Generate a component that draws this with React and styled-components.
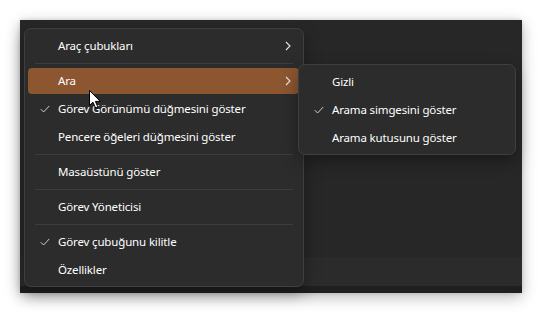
import React from "react";
import styled, { createGlobalStyle } from "styled-components";

const GlobalStyle = createGlobalStyle`
  html, body {
    margin: 0;
    background: #ffffff;
  }
  * {
    box-sizing: border-box;
  }
`;

const mainItems = [
  { id: "toolbars", label: "Araç çubukları", submenu: true },
  { id: "sep1", separator: true },
  { id: "search", label: "Ara", submenu: true, active: true },
  { id: "taskview", label: "Görev Görünümü düğmesini göster", checked: true },
  { id: "windows", label: "Pencere öğeleri düğmesini göster" },
  { id: "sep2", separator: true },
  { id: "desktop", label: "Masaüstünü göster" },
  { id: "sep3", separator: true },
  { id: "taskmgr", label: "Görev Yöneticisi" },
  { id: "sep4", separator: true },
  { id: "lock", label: "Görev çubuğunu kilitle", checked: true },
  { id: "props", label: "Özellikler" }
];

const searchItems = [
  { id: "hidden", label: "Gizli" },
  { id: "icon", label: "Arama simgesini göster", checked: true },
  { id: "box", label: "Arama kutusunu göster" }
];

const Check = () => (
  <svg width="10" height="8" viewBox="0 0 10 8">
    <path d="M0.8 4.2 L3.6 7 L9.2 1" fill="none" stroke="#cfcfcf" strokeWidth="1" />
  </svg>
);

const Chevron = () => (
  <svg width="6" height="10" viewBox="0 0 6 10">
    <path d="M1 1 L5 5 L1 9" fill="none" stroke="#e6e6e6" strokeWidth="1.1" />
  </svg>
);

const Pointer = () => (
  <svg width="13" height="19" viewBox="0 0 13 19">
    <path
      d="M0.5 0.5 L0.5 15.5 L4 12.2 L6.6 18 L8.9 17 L6.4 11.4 L11.3 11.4 Z"
      fill="#ffffff"
      stroke="#000000"
      strokeWidth="1"
      strokeLinejoin="round"
    />
  </svg>
);

const MenuList = ({ items }) => (
  <>
    {items.map(item =>
      item.separator ? (
        <Separator key={item.id} />
      ) : (
        <Row key={item.id}>
          <RowInner active={item.active}>
            <CheckSlot>{item.checked && <Check />}</CheckSlot>
            <Label>{item.label}</Label>
            <ArrowSlot>{item.submenu && <Chevron />}</ArrowSlot>
          </RowInner>
        </Row>
      )
    )}
  </>
);

const App = () => {
  return (
    <>
      <GlobalStyle />
      <Page>
        <Window>
          <Desktop />
          <TaskbarBand />
          <BottomStrip />

          <MainMenu>
            <MenuList items={mainItems} />
          </MainMenu>

          <SubMenu>
            <MenuList items={searchItems} />
          </SubMenu>

          <Cursor>
            <Pointer />
          </Cursor>
        </Window>
      </Page>
    </>
  );
};

const Page = styled.div`
  width: 542px;
  height: 313px;
  padding: 20px;
  background: #ffffff;
`;

const Window = styled.div`
  position: relative;
  width: 502px;
  height: 273px;
  display: flex;
  flex-direction: column;
  background: #272727;
  box-shadow: 0 4px 14px rgba(0, 0, 0, 0.28), 0 0 4px rgba(0, 0, 0, 0.12);
  font-family: "Noto Sans", "Open Sans", sans-serif;
`;

const Desktop = styled.div`
  flex: 1;
`;

const TaskbarBand = styled.div`
  height: 29px;
  background: #2b2b2b;
`;

const BottomStrip = styled.div`
  height: 7px;
  background: #1f1f1f;
`;

const Menu = styled.div`
  position: absolute;
  display: flex;
  flex-direction: column;
  background: #2c2c2c;
  border: 1px solid #3f3f3f;
  border-radius: 7px;
  box-shadow: 0 6px 16px rgba(0, 0, 0, 0.35);
`;

const MainMenu = styled(Menu)`
  left: 4px;
  top: 8px;
  width: 280px;
  padding: 3px 0 2px;
`;

const SubMenu = styled(Menu)`
  left: 278px;
  top: 44px;
  width: 218px;
  padding: 3px 0 2px;
`;

const Row = styled.div`
  height: 28px;
  padding: 1px 4px 1px 3px;
`;

const RowInner = styled.div`
  height: 100%;
  display: flex;
  align-items: center;
  border-radius: 4px;
  background: ${p => (p.active ? "#8b5630" : "transparent")};
`;

const CheckSlot = styled.div`
  width: 30px;
  display: flex;
  justify-content: center;
  padding-left: 4px;
`;

const Label = styled.span`
  flex: 1;
  color: #ffffff;
  font-size: 11.5px;
  letter-spacing: -0.15px;
  line-height: 16px;
  white-space: nowrap;
`;

const ArrowSlot = styled.div`
  width: 20px;
  display: flex;
  justify-content: center;
  padding-right: 2px;
`;

const Separator = styled.div`
  height: 1px;
  margin: 3px 10px;
  background: #3d3d3d;
`;

const Cursor = styled.div`
  position: absolute;
  left: 69px;
  top: 70px;
  width: 13px;
  height: 19px;
  line-height: 0;
`;

export default App;
